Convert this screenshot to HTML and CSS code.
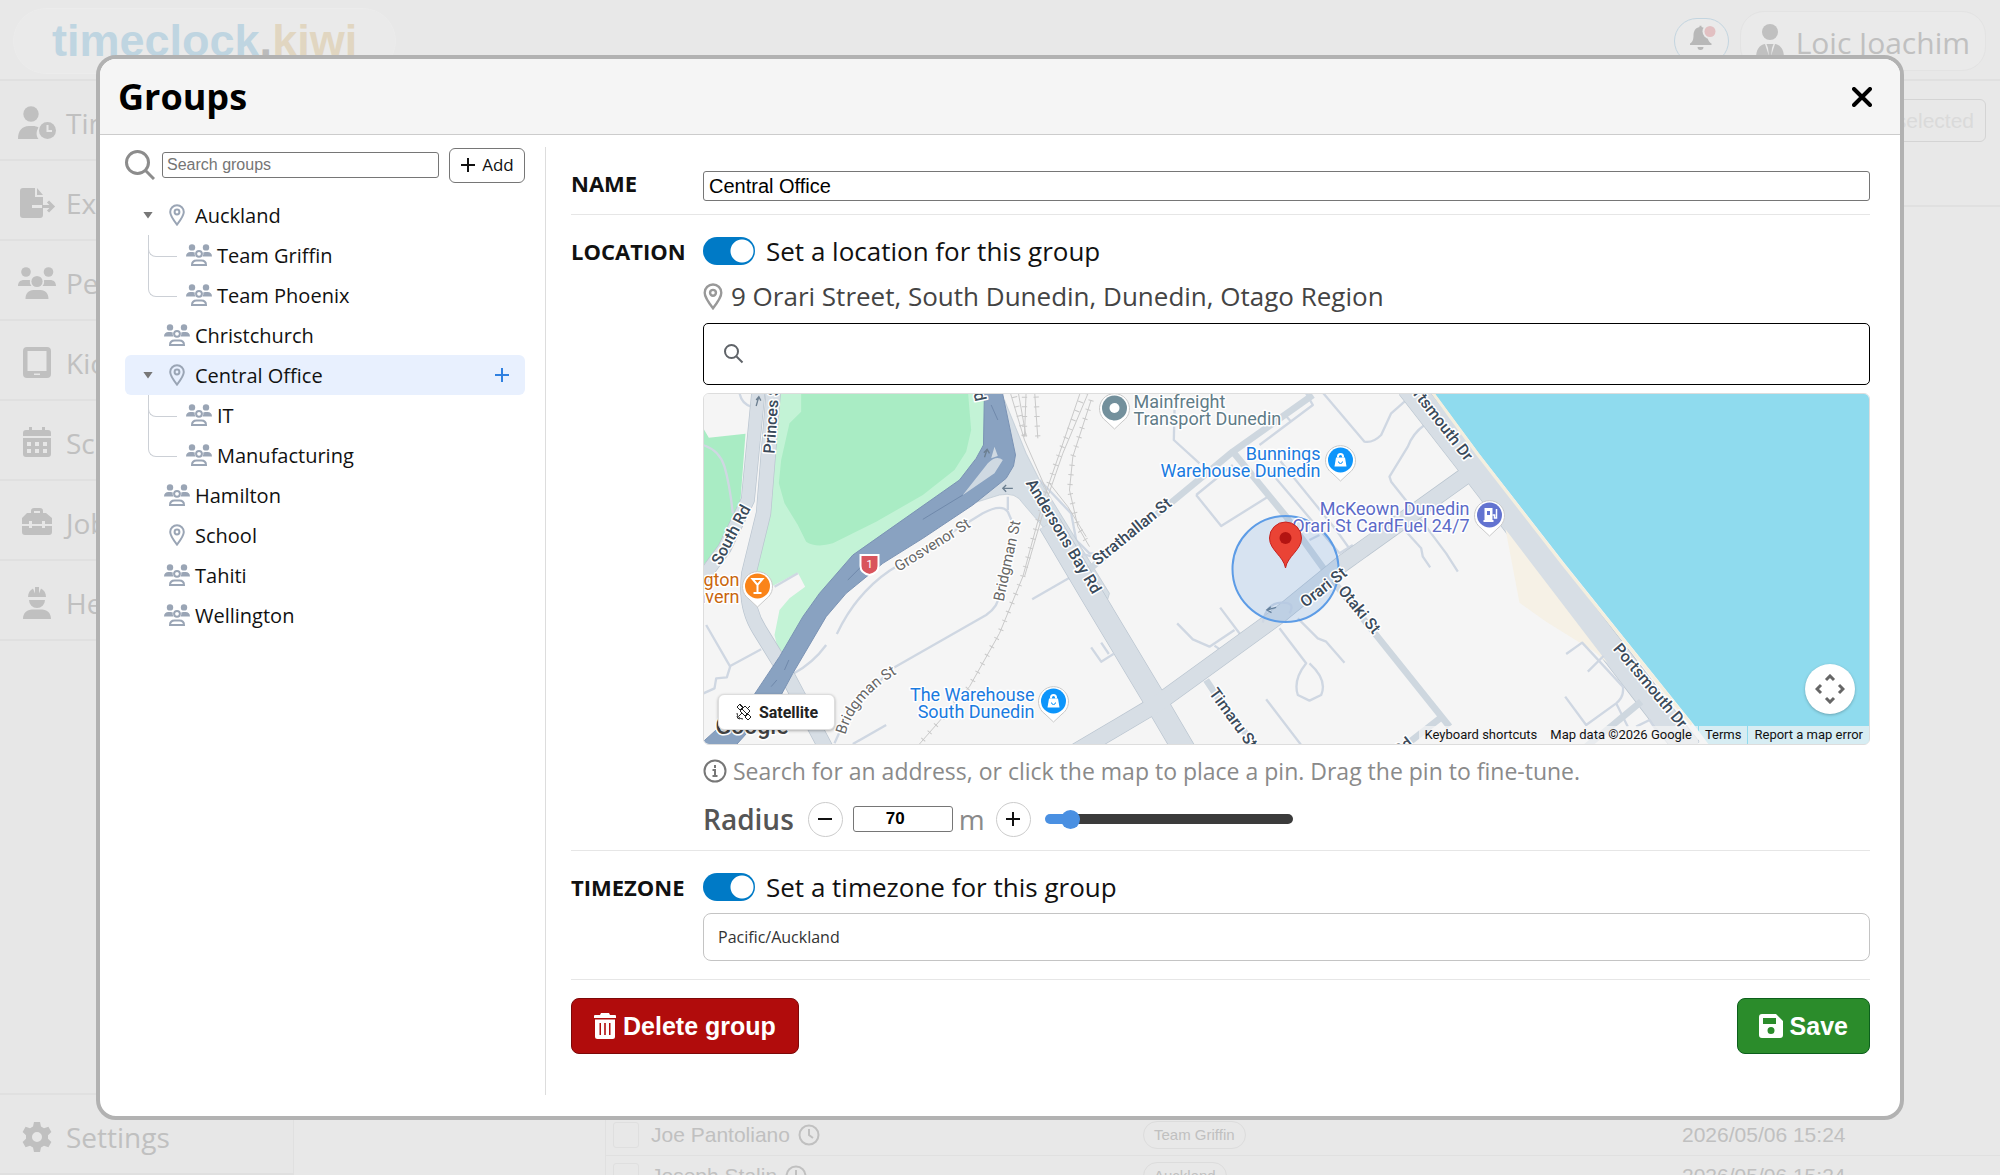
FILE: index.html
```html
<!DOCTYPE html>
<html lang="en">
<head>
<meta charset="utf-8">
<title>Groups</title>
<meta name="viewport" content="width=device-width, initial-scale=1">
<link rel="stylesheet" href="styles.css">
</head>
<body>
<svg class="sprite" aria-hidden="true">
  <symbol id="i-users" viewBox="0 0 26 22">
    <circle cx="6" cy="3.4" r="3.2"/><circle cx="20" cy="3.4" r="3.2"/>
    <path d="M0 12.6C0 9.6 1.8 8 4.4 8h2.4c.8 0 1.400.2 2 .5-.4 1.600 0 3 .8 4.100H0zM26 12.600C26 9.600 24.200 8 21.600 8h-2.400c-.8 0-1.400.2-2 .5.4 1.600 0 3-.8 4.100H26z"/>
    <circle class="ring" cx="13" cy="9.800" r="2.900"/>
    <path class="ring" d="M6 20.900c0-2.800 2-4.500 4.600-4.500h4.800c2.600 0 4.600 1.700 4.600 4.500z"/>
  </symbol>
  <symbol id="i-people" viewBox="0 0 38 32">
    <circle cx="8" cy="5" r="4.800"/><circle cx="30.500" cy="5" r="4.800"/><circle cx="19" cy="14.500" r="5.600"/>
    <path d="M0 19c0-4 2.400-6 6-6h4.400c.6 0 1.200.1 1.700.3-.6 2.200 0 4.400 1.400 5.700zM38 19c0-4-2.400-6-6-6h-4.400c-.6 0-1.200.1-1.700.3.6 2.200 0 4.400-1.400 5.700zM7.500 32c0-5.500 3-9 8-9h7c5 0 8 3.500 8 9z"/>
  </symbol>
  <symbol id="i-pin" viewBox="0 0 16 22">
    <path class="line" d="M8 20.600C5.500 17.400 1.200 11.600 1.200 8a6.800 6.800 0 0 1 13.600 0c0 3.600-4.300 9.400-6.800 12.600z"/>
    <circle class="line" cx="8" cy="8" r="2.400"/>
  </symbol>
  <symbol id="i-plus" viewBox="0 0 16 16"><path class="line" d="M8 1v14M1 8h14"/></symbol>
  <symbol id="i-clock" viewBox="0 0 22 22"><circle class="line" cx="11" cy="11" r="9.500"/><path class="line" d="M11 5v6l4 3"/></symbol>
  <symbol id="i-mappin" viewBox="-18 -18 36 42">
    <path class="pin-edge" d="M0 21l-8.500-8A15 15 0 1 1 8.500 13z"/>
    <circle r="12.500"/>
  </symbol>
  <symbol id="i-bag" viewBox="-7 -7 14 14"><path d="M-4.500-2.500h9l1.500 9H-6z"/><path class="line" d="M-2.500-2.500v-1a2.500 2.500 0 0 1 5 0v1"/><path class="cut" d="M-2 1.500a2 2 0 0 0 4 0"/></symbol>
</svg>

<div class="app">
  <header class="topbar">
    <a class="logo" href="#"><span class="logo-time">timeclock</span><span class="logo-dot">.</span><span class="logo-kiwi">kiwi</span></a>
    <div class="topbar-right">
      <button class="bell" type="button" aria-label="Notifications">
        <svg width="24" height="27" viewBox="0 0 24 27"><path d="M10.500 2V.800h2V2c4 .8 6 4 6 8 0 5 1.500 7 4 8.500v1.500H1v-1.500C3.500 17 4.500 15 4.500 10c0-4 2-7.200 6-8zM8.500 22h6a3 3 0 0 1-6 0z"/><circle class="bell-halo" cx="21" cy="6.500" r="7.500"/><circle class="bell-dot" cx="21" cy="6.500" r="5.500"/></svg>
      </button>
      <button class="user" type="button">
        <svg width="28" height="36" viewBox="0 0 28 36"><circle cx="14" cy="8" r="8"/><path d="M0 34c0-8 3-13 9-14l4 12-1-8-1.500-4h7L16 24l-1 8 4-12c6 1 9 6 9 14z"/></svg>
        Loic Joachim
      </button>
    </div>
  </header>
  <nav class="sidebar">
    <a class="nav-item" href="#"><svg width="38" height="34" viewBox="0 0 38 34"><circle cx="13" cy="8" r="7.700"/><path d="M0 33c0-8 4-13 11-13h4c2 0 4 .5 5.500 1.500C18 25.500 18 30 20.500 33z"/><circle cx="29.500" cy="24.500" r="8.500"/><path class="notch" d="M29.500 19v6h4.500"/></svg>Timesheets</a>
    <a class="nav-item" href="#"><svg width="38" height="34" viewBox="0 0 38 34"><path d="M5 2h12v9h8v8H14v3h11v7a3 3 0 0 1-3 3H5a3 3 0 0 1-3-3V5a3 3 0 0 1 3-3zM19 2l6 7h-6z"/><path class="line thick" d="M24 20.500h10M30 15.500l5 5-5 5"/></svg>Export</a>
    <a class="nav-item" href="#"><svg width="38" height="32"><use href="#i-people"/></svg>People</a>
    <a class="nav-item" href="#"><svg width="38" height="34" viewBox="0 0 38 34"><path fill-rule="evenodd" d="M9 1h20a4 4 0 0 1 4 4v23a4 4 0 0 1-4 4H9a4 4 0 0 1-4-4V5a4 4 0 0 1 4-4zm.5 4v20h19V5zM16 27.500v1.500h6v-1.500z"/></svg>Kiosks</a>
    <a class="nav-item" href="#"><svg width="38" height="34" viewBox="0 0 38 34"><path fill-rule="evenodd" d="M11 1h3v3h10V1h3v3h3a3 3 0 0 1 3 3v3H5V7a3 3 0 0 1 3-3h3zM5 12h28v16a3 3 0 0 1-3 3H8a3 3 0 0 1-3-3zm4 4v4h4v-4zm8 0v4h4v-4zm8 0v4h4v-4zM9 23v4h4v-4zm8 0v4h4v-4zm8 0v4h4v-4z"/></svg>Schedule</a>
    <a class="nav-item" href="#"><svg width="38" height="34" viewBox="0 0 38 34"><path fill-rule="evenodd" d="M13 7V5a3 3 0 0 1 3-3h6a3 3 0 0 1 3 3v2h3l6 5v6h-7v-3h-3v3H14v-3h-3v3H4v-6l5-5zm3 0h6V5h-6zM4 20h7v2h3v-2h10v2h3v-2h7v6a3 3 0 0 1-3 3H7a3 3 0 0 1-3-3z"/></svg>Jobs</a>
    <a class="nav-item" href="#"><svg width="38" height="34" viewBox="0 0 38 34"><path d="M10 11c0-4 2-7 5-8.500l2 5V1h4v6.500l2-5c3 1.500 5 4.500 5 8.500zM11 14h16a8 8 0 0 1-16 0zM5 33c0-6 4-9.500 9-9.500h10c5 0 9 3.500 9 9.500z"/></svg>Health</a>
    <a class="nav-item nav-settings" href="#"><svg width="38" height="34" viewBox="0 0 38 34"><path fill-rule="evenodd" d="M16 2h6l1 4.500 3 1.700 4.400-1.400 3 5.200-3.400 3.200v3.600l3.400 3.200-3 5.200-4.400-1.400-3 1.700-1 4.500h-6l-1-4.500-3-1.700L7.600 27.200l-3-5.200L8 18.800v-3.600L4.600 12l3-5.200L12 8.200l3-1.700zm3 10a5 5 0 1 0 0 10 5 5 0 0 0 0-10z"/></svg>Settings</a>
  </nav>
  <main class="main">
    <div class="toolbar"><button class="ghost-button" type="button">selected</button></div>
    <div class="content">
      <table class="people">
        <tbody>
          <tr><td><label class="person"><input type="checkbox" aria-label="Select Joe Pantoliano">Joe Pantoliano <svg width="22" height="22"><use href="#i-clock"/></svg></label></td><td><span class="tag">Team Griffin</span></td><td>2026/05/06 15:24</td></tr>
          <tr><td><label class="person"><input type="checkbox" aria-label="Select Joseph Stalin">Joseph Stalin <svg width="22" height="22"><use href="#i-clock"/></svg></label></td><td><span class="tag">Auckland</span></td><td>2026/05/06 15:24</td></tr>
        </tbody>
      </table>
    </div>
  </main>
</div>

<section class="modal" role="dialog" aria-labelledby="modal-title">
  <header class="modal-header">
    <h1 id="modal-title">Groups</h1>
    <button class="close" type="button" aria-label="Close"><svg width="20" height="20" viewBox="0 0 20 20"><path d="M2 2l16 16M18 2L2 18"/></svg></button>
  </header>
  <div class="modal-body">
    <aside class="groups">
      <div class="group-search">
        <svg width="30" height="30" viewBox="0 0 30 30" aria-hidden="true"><circle cx="12.500" cy="12.500" r="11"/><path d="M20.500 20.500l8.500 8.500"/></svg>
        <input type="text" placeholder="Search groups" aria-label="Search groups">
        <button class="add" type="button"><svg width="16" height="16"><use href="#i-plus"/></svg>Add</button>
      </div>
      <ul class="tree">
        <li>
          <div class="node"><button class="caret" type="button" aria-label="Collapse Auckland"></button><svg class="icon"><use href="#i-pin"/></svg><a href="#">Auckland</a></div>
          <ul>
            <li><div class="node"><svg class="icon"><use href="#i-users"/></svg><a href="#">Team Griffin</a></div></li>
            <li><div class="node"><svg class="icon"><use href="#i-users"/></svg><a href="#">Team Phoenix</a></div></li>
          </ul>
        </li>
        <li><div class="node"><span class="caret-space"></span><svg class="icon"><use href="#i-users"/></svg><a href="#">Christchurch</a></div></li>
        <li>
          <div class="node selected"><button class="caret" type="button" aria-label="Collapse Central Office"></button><svg class="icon"><use href="#i-pin"/></svg><a href="#">Central Office</a><button class="add-child" type="button" aria-label="Add subgroup"><svg width="16" height="16"><use href="#i-plus"/></svg></button></div>
          <ul>
            <li><div class="node"><svg class="icon"><use href="#i-users"/></svg><a href="#">IT</a></div></li>
            <li><div class="node"><svg class="icon"><use href="#i-users"/></svg><a href="#">Manufacturing</a></div></li>
          </ul>
        </li>
        <li><div class="node"><span class="caret-space"></span><svg class="icon"><use href="#i-users"/></svg><a href="#">Hamilton</a></div></li>
        <li><div class="node"><span class="caret-space"></span><svg class="icon"><use href="#i-pin"/></svg><a href="#">School</a></div></li>
        <li><div class="node"><span class="caret-space"></span><svg class="icon"><use href="#i-users"/></svg><a href="#">Tahiti</a></div></li>
        <li><div class="node"><span class="caret-space"></span><svg class="icon"><use href="#i-users"/></svg><a href="#">Wellington</a></div></li>
      </ul>
    </aside>

    <form class="form">
      <div class="row row-name">
        <label class="row-label" for="name">NAME</label>
        <input class="name-input" id="name" type="text" value="Central Office">
      </div>

      <div class="row">
        <span class="row-label">LOCATION</span>
        <div class="fields">
          <label class="toggle"><input type="checkbox" role="switch" checked>Set a location for this group</label>
          <p class="address"><svg width="20" height="27" viewBox="0 0 16 22"><use href="#i-pin"/></svg>9 Orari Street, South Dunedin, Dunedin, Otago Region</p>
          <div class="place-search">
            <svg width="24" height="24" viewBox="0 0 24 24" aria-hidden="true"><circle cx="9.500" cy="9.500" r="6.500"/><path d="M14.500 14.500l6 6"/></svg>
            <input type="text" aria-label="Search for an address">
          </div>

          <div class="map">
            <svg class="map-canvas" viewBox="0 0 1166 350" preserveAspectRatio="xMidYMid slice">
              <rect width="1166" height="350" fill="#f5f5f5"/>
              <g transform="scale(.33333)">
                <!-- west: parks, highway, rail yard -->
                <g transform="translate(-42 -42)">
                  <path fill="#a9ecc4" d="M30 125L58 173 168 161 152 375 105 480 30 570z"/>
                  <path fill="#c3f3d6" d="M262 30H890V190L810 305 500 540 400 660 300 850 262 795 255 765 270 690 300 655 347 620 325 578 245 620 195 575 240 400z"/>
                  <path fill="#a9ecc4" d="M335 30H835L845 150 830 215 795 270 700 345 560 425 430 490Q380 505 350 485L325 435 285 370 268 310 275 240 300 130 335 95z"/>
                  <path class="lane" d="M40 195Q90 210 105 260T130 400"/>
                  <path class="lane" d="M150 38Q155 70 185 80M255 620L325 580"/>
                  <path class="lane" d="M50 735L122 860 112 892 80 895 75 925 42 940M118 860L215 808M310 882Q370 850 410 795M490 1092L590 1035"/>
                  <path class="lane" d="M442 762Q500 640 600 572L880 400Q935 370 955 395L970 430M955 350V390M610 865L890 705Q940 670 925 620M435 1090L480 990 610 865"/>
                  <path class="lane" d="M1028 658L1140 593M1050 300L1145 400 1160 480 1200 520H1260"/>
                  <path class="road-edge" stroke-width="42" d="M207 30L175 360 105 505 20 620"/>
                  <path class="road" stroke-width="38" d="M207 30L175 360 105 505 20 620"/>
                  <path class="road-edge" stroke-width="46" d="M252 30L222 400 178 580Q165 680 210 750L290 880 412 1110"/>
                  <path class="road" stroke-width="42" d="M252 30L222 400 178 580Q165 680 210 750L290 880 412 1110"/>
                  <path fill="#d6dee5" stroke="#b9c5d0" stroke-width="2" d="M850 370L930 345Q980 335 1000 370L1060 440 1230 740 1260 640 1050 300 1010 220 945 60 900 60 930 260z"/>
                  <path fill="#89a2c1" stroke="#7a93b4" stroke-width="3" d="M885 20L882 195 860 235 810 300 490 525 390 640 340 710 270 830 190 950 30 1095H140L275 945 310 880 410 710 470 640 580 550 700 475 850 375 950 295 972 258 978 225 935 20z"/>
                  <path fill="#cfd9e2" d="M940 240Q920 225 895 250L820 345 915 280zM905 235L925 228 915 200z"/>
                  <path stroke="#6f89ab" stroke-width="3" fill="none" d="M700 418L820 345M475 600L515 560M285 870L298 840M245 920L262 900M905 75L925 120"/>
                  <g class="arrow"><path d="M200 78L208 50M200 60L208 50 214 62M885 232L893 208M883 218L893 208 900 220M970 325H940M950 315L940 325 950 335"/></g>
                  <g class="rail"><path d="M960 30L1005 180 1075 340M985 30L1010 170M1010 30L1005 170M1035 30L1045 175M1175 30L1110 220 1065 350 1000 590 930 760 840 920 690 1092M1200 30L1120 220 1075 350 1005 590M1205 60L1150 230 1140 330 1165 440 1200 500M1080 310L1135 380 1190 470"/></g>
                  <g class="ties"><path d="M975 50L1005 170M1005 50V170M1040 50L1045 175M1185 38L1110 220 1065 350 1000 590 930 760 840 920 690 1092M1205 60L1150 230 1140 330 1165 440 1200 500"/></g>
                </g>
                <!-- centre: Orari St, Strathallan St -->
                <g transform="translate(1128 -42)">
                  <path class="lane" d="M285 90L283 180 360 250M350 345L425 438 563 352M350 345L460 255M540 195L700 75 680 40M612 100L635 125M730 38L855 185Q880 190 905 165L935 100 975 65M1035 135Q1000 160 985 200L930 290 935 305 1010 400 1100 520 1135 575M560 260L780 520 820 495M600 240L770 450 820 520M930 400L1025 505 1030 530 1052 562M690 480L720 465M600 745L680 850Q640 900 655 945L690 962 725 945Q745 900 690 850M655 715L715 775 740 785 795 848M293 730L340 778 390 800 465 750M405 797L445 825M422 683L495 780M560 958L665 1095M35 802L65 845 102 822M65 788L88 822M0 520L40 530"/>
                  <path class="street" d="M700 45L460 215 270 372 -10 600M460 215L620 410 750 590 890 765 1110 1040M1085 1012L960 1110M380 900L420 960 530 1100"/>
                  <path class="road-edge" stroke-width="70" d="M-90 430L40 650 235 975 320 1120"/>
                  <path class="road-edge" stroke-width="52" d="M1175 275L790 550 600 705 380 865 235 970 -10 1115"/>
                  <path class="road-edge" stroke-width="80" d="M990 20L1200 290 1790 1060 1830 1110"/>
                  <path class="road" stroke-width="66" d="M-90 430L40 650 235 975 320 1120"/>
                  <path class="road" stroke-width="48" d="M1175 275L790 550 600 705 380 865 235 970 -10 1115"/>
                  <path class="road" stroke-width="76" d="M990 20L1200 290 1790 1060 1830 1110"/>
                  <path class="lane" d="M550 728Q560 670 605 668T630 700"/>
                  <g class="arrow"><path d="M590 682L562 690M574 680L562 690 576 698"/></g>
                </g>
                <!-- east: harbour -->
                <g transform="translate(2328 -42)">
                  <path fill="#f6f1e6" d="M78 448L385 850 345 815 200 725 120 668z"/>
                  <path class="lane" d="M260 822L308 788 430 920Q435 950 410 970L320 1035 257 950M325 875L372 828M410 970L445 1040M470 1040L510 1020 530 1050"/>
                  <path class="street" d="M485 965L400 1035 320 1100"/>
                  <path fill="#8fdbee" d="M-150 20L0 222 260 556 640 1030 700 1110H1200V20z"/>
                  <path fill="none" stroke="#f4efdf" stroke-width="9" d="M-154 20L-4 225 256 560 636 1034"/>
                </g>
              </g>
              <g class="radius"><circle cx="582" cy="175" r="53"/></g>
              <g class="label-road">
                <text transform="translate(71 60) rotate(-86)">Princes St</text>
                <text transform="translate(17 172) rotate(-62)">South Rd</text>
                <text class="end" transform="translate(272 8) rotate(78)">Rd</text>
                <text transform="translate(322 89) rotate(59)">Andersons Bay Rd</text>
                <text transform="translate(394 172) rotate(-39)">Strathallan St</text>
                <text transform="translate(602 214) rotate(-38)">Orari St</text>
                <text transform="translate(634 197) rotate(51)">Otaki St</text>
                <text transform="translate(505 299) rotate(54)">Timaru St</text>
                <text class="end" transform="translate(762 68) rotate(52)">Portsmouth Dr</text>
                <text transform="translate(909 255) rotate(50)">Portsmouth Dr</text>
                <text class="end" transform="translate(710 351) rotate(-38)">Teviot Rd</text>
              </g>
              <g class="label-street">
                <path id="bridgman" fill="none" d="M142 341Q152 302 200 276"/>
                <text transform="translate(195 178) rotate(-32)">Grosvenor St</text>
                <text transform="translate(300 208) rotate(-78)">Bridgman St</text>
                <text><textPath href="#bridgman">Bridgman St</textPath></text>
              </g>
              <g class="label-place">
                <g fill="#5f7c87"><text x="430" y="14">Mainfreight</text><text x="430" y="31">Transport Dunedin</text></g>
                <g class="end" fill="#1a7be0"><text x="617" y="66">Bunnings</text><text x="617" y="83">Warehouse Dunedin</text><text x="331" y="307">The Warehouse</text><text x="331" y="324">South Dunedin</text></g>
                <g class="end" fill="#5c6bc8"><text x="766" y="121">McKeown Dunedin</text><text x="766" y="138">Orari St CardFuel 24/7</text></g>
                <g class="end" fill="#c9660c"><text x="36" y="192">Kensington</text><text x="36" y="209">Tavern</text></g>
              </g>
              <g class="places">
                <use href="#i-mappin" x="393" y="-4" width="36" height="42" fill="#73909c"/><circle cx="411" cy="14" r="5" fill="#fff"/>
                <use href="#i-mappin" x="619" y="48" width="36" height="42" fill="#0d95fb"/><use class="glyph" href="#i-bag" x="630" y="59" width="14" height="14"/>
                <use href="#i-mappin" x="332" y="289" width="36" height="42" fill="#0d95fb"/><use class="glyph" href="#i-bag" x="343" y="300" width="14" height="14"/>
                <use href="#i-mappin" x="768" y="103" width="36" height="42" fill="#6373d0"/><path fill="#fff" fill-rule="evenodd" d="M781 114h8v12h1v2h-10v-2h1zm2.500 3v4h3v-4z"/><path fill="none" stroke="#fff" stroke-width="1.500" d="M789 121h2v3h2v-9"/>
                <use href="#i-mappin" x="36" y="174" width="36" height="42" fill="#fa8419"/><path fill="none" stroke="#fff" stroke-width="2" d="M49 185h10l-5 6zM54 190v9M50 199h8"/>
              </g>
              <path fill="#d9545c" stroke="#fff" stroke-width="2" d="M157 161h18v11q0 7-9 9-9-2-9-9z"/><text class="shield" x="166" y="174">1</text>
              <path fill="#ea4335" stroke="#c5221f" d="M582 174C580 162 566 156 566 144a16 16 0 0 1 32 0c0 12-14 18-16 30z"/><circle cx="582" cy="144" r="6" fill="#b31412"/>
              <text class="brand" x="12" y="340">Google</text>
            </svg>
            <button class="satellite" type="button"><svg width="18" height="18" viewBox="0 0 18 18"><path d="M7 6l3-3 5 5-3 3zM7 6L5 8l5 5 2-2zM5 2l3 3M2 4l3-3 3 3-3 3zM10 14l3-3 3 3-3 3zM7 10l-3 3M2 10a6 6 0 0 0 6 6M2 13a3 3 0 0 0 3 3M13 5l2-2"/></svg>Satellite</button>
            <button class="camera" type="button" aria-label="Map camera controls"><svg width="30" height="30" viewBox="0 0 30 30"><path d="M11 6l4-4 4 4M11 24l4 4 4-4M6 11l-4 4 4 4M24 11l4 4-4 4"/></svg></button>
            <div class="map-footer"><button type="button">Keyboard shortcuts</button><span>Map data ©2026 Google</span><a href="#">Terms</a><a href="#">Report a map error</a></div>
          </div>

          <p class="hint"><svg width="24" height="24" viewBox="0 0 24 24"><circle cx="12" cy="12" r="10.500"/><path d="M12 6v3M9.500 11H12v6M9.500 17h5"/></svg>Search for an address, or click the map to place a pin. Drag the pin to fine-tune.</p>
          <div class="radius-row">
            <label class="radius-label" for="radius">Radius</label>
            <button class="step" type="button" aria-label="Decrease radius"><svg width="16" height="16" viewBox="0 0 16 16"><path class="line" d="M1 8h14"/></svg></button>
            <input class="radius-input" id="radius" type="number" value="70">
            <span class="unit">m</span>
            <button class="step" type="button" aria-label="Increase radius"><svg width="16" height="16"><use href="#i-plus"/></svg></button>
            <input class="slider" type="range" min="0" max="1000" value="70" aria-label="Radius in metres">
          </div>
        </div>
      </div>

      <div class="row row-zone">
        <span class="row-label">TIMEZONE</span>
        <div class="fields">
          <label class="toggle"><input type="checkbox" role="switch" checked>Set a timezone for this group</label>
          <select class="zone" aria-label="Timezone"><option>Pacific/Auckland</option></select>
        </div>
      </div>

      <div class="actions">
        <button class="btn btn-delete" type="button"><svg width="22" height="26" viewBox="0 0 22 26"><path fill-rule="evenodd" d="M7 0h8l1 2h5a1 1 0 0 1 1 1v2H0V3a1 1 0 0 1 1-1h5zM1 6.500h20v17a2.500 2.500 0 0 1-2.500 2.500h-15A2.500 2.500 0 0 1 1 23.500zM5.500 10v12H7V10zm4.700 0v12h1.600V10zM15 10v12h1.500V10z"/></svg>Delete group</button>
        <button class="btn btn-save" type="submit"><svg width="24" height="24" viewBox="0 0 24 24"><path fill-rule="evenodd" d="M3 0h14l7 7v14a3 3 0 0 1-3 3H3a3 3 0 0 1-3-3V3a3 3 0 0 1 3-3zm1 4v6h13V4zm8 9a3.500 3.500 0 1 0 0 7 3.500 3.500 0 0 0 0-7z"/></svg>Save</button>
      </div>
    </form>
  </div>
</section>
</body>
</html>
```
FILE: styles.css
```css
:root {
  --ui: "Open Sans", "Noto Sans", sans-serif;
  --arial: "Liberation Sans", Arial, sans-serif;
  --muted: #c0c0c0;
  --rule: #e6e6e6;
}

* { box-sizing: border-box; }

body {
  margin: 0;
  background: #e8e8e8;
  font-family: var(--ui);
  color: #111;
  overflow: hidden;
}

h1, p, ul { margin: 0; padding: 0; }
ul { list-style: none; }
a { color: inherit; text-decoration: none; }
button { font: inherit; color: inherit; padding: 0; cursor: pointer; }
svg { flex: none; }
.sprite { display: none; }

.line { fill: none; stroke: currentColor; stroke-width: 2; }
.ring { fill: none; stroke: currentColor; stroke-width: 2; }
.thick { stroke-width: 3; }

/* Page behind the dialog */
.app {
  display: grid;
  grid-template: 81px 1fr / 294px 1fr;
  height: 100vh;
  overflow: hidden;
  color: var(--muted);
  fill: currentColor;
}

.topbar {
  grid-column: 1 / -1;
  display: flex;
  justify-content: space-between;
  align-items: center;
  padding: 2px 14px 0 13px;
  border-bottom: 2px solid #e0e0e0;
}

.logo {
  height: 66px;
  padding: 0 38px;
  border: 1px solid #ececec;
  border-radius: 33px;
  background: #eaeaea;
  font: bold 45px/64px var(--arial);
}
.logo-time { color: #bfd5e1; }
.logo-dot { color: #bbb; }
.logo-kiwi { color: #e1d6c1; }

.topbar-right { display: flex; align-items: center; gap: 11px; }
.bell {
  width: 55px;
  height: 46px;
  border: 1px solid #c3d5e0;
  border-radius: 23px;
  background: #eaeaea;
}
.bell svg { overflow: visible; fill: #b8b8b8; }
.bell .bell-halo { fill: #eaeaea; }
.bell .bell-dot { fill: #e2c0c2; }
.user {
  display: flex;
  align-items: center;
  gap: 12px;
  height: 60px;
  padding: 3px 15px 0 15px;
  border: 1px solid #e3e3e3;
  border-radius: 24px;
  background: #eaeaea;
  font-size: 30px;
}
.user svg { fill: var(--muted); }

.sidebar {
  display: flex;
  flex-direction: column;
  border-right: 1px solid #e0e0e0;
  background: #e7e7e7;
}
.nav-item {
  display: flex;
  align-items: center;
  gap: 10px;
  height: 80px;
  padding: 5px 0 0 18px;
  border-bottom: 2px solid #e0e0e0;
  font-size: 28px;
}
.nav-settings {
  height: 82px;
  margin-top: auto;
  border-top: 2px solid #e0e0e0;
}
.notch { fill: none; stroke: #e7e7e7; stroke-width: 2; }

.main { display: flex; flex-direction: column; min-height: 0; }
.toolbar {
  height: 126px;
  padding: 18px 14px;
  border-bottom: 2px solid #e0e0e0;
  text-align: right;
}
.ghost-button {
  height: 43px;
  padding: 0 11px;
  border: 1px solid #d4d4d4;
  border-radius: 6px;
  background: none;
  color: #dadada;
  font: 21px var(--arial);
}
.content {
  flex: 1;
  display: flex;
  flex-direction: column;
  justify-content: flex-end;
  margin: 0 0 -21px 311px;
  border-left: 1px solid #e0e0e0;
}
.people {
  width: 100%;
  border-collapse: collapse;
  table-layout: fixed;
  font: 21px var(--arial);
}
.people td { height: 40px; padding: 0; border-bottom: 1px solid #e0e0e0; }
.people td:first-child { width: 537px; padding-left: 7px; }
.people td:nth-child(2) { width: 539px; }
.person { display: flex; align-items: center; gap: 8px; }
.person input {
  appearance: none;
  width: 26px;
  height: 26px;
  margin: 0 4px 0 0;
  border: 1px solid #dfdfdf;
  border-radius: 3px;
}
.tag {
  display: inline-block;
  height: 28px;
  padding: 0 10px;
  border: 1px solid #dcdcdc;
  border-radius: 14px;
  font-size: 15px;
  line-height: 26px;
  vertical-align: middle;
}

/* Dialog */
.modal {
  position: fixed;
  inset: 55px 96px;
  display: flex;
  flex-direction: column;
  border: 4px solid #b2b2b2;
  border-radius: 20px;
  background: #fff;
  overflow: hidden;
}
.modal-header {
  display: flex;
  align-items: center;
  justify-content: space-between;
  height: 76px;
  padding: 0 28px 0 18px;
  border-bottom: 1px solid #ccc;
  background: #f5f5f5;
}
.modal-header h1 { font-size: 36px; line-height: 48px; color: #000; }
.close { height: 20px; border: 0; background: none; line-height: 0; }
.close path { stroke: #000; stroke-width: 4; stroke-linecap: round; }

.modal-body {
  flex: 1;
  display: flex;
  gap: 25px;
  padding: 12px 30px 21px 25px;
}

.groups { width: 421px; padding-right: 20px; border-right: 1px solid #ddd; }
.group-search { display: flex; align-items: center; height: 36px; margin-bottom: 12px; }
.group-search > svg { fill: none; stroke: #8c8c8c; stroke-width: 3; }
.group-search input {
  flex: 1;
  min-width: 0;
  height: 26px;
  margin: 0 10px 0 7px;
  padding: 0 4px;
  border: 1px solid #767676;
  border-radius: 3px;
  font: 16px var(--arial);
}
.group-search input::placeholder { color: #757575; }
.add {
  display: flex;
  align-items: center;
  justify-content: center;
  gap: 6px;
  width: 76px;
  height: 35px;
  border: 1px solid #767676;
  border-radius: 6px;
  background: #fff;
  font-size: 17px;
  line-height: 24px;
}

.node {
  display: flex;
  align-items: center;
  height: 40px;
  padding: 0 15px 0 18px;
  border-radius: 6px;
  font-size: 20px;
}
.node.selected { background: #e8f0fe; }
.node a { flex: 1; margin-left: 5px; color: #111; }
.icon { width: 26px; height: 22px; color: #9aa5b5; fill: currentColor; }
.caret, .caret-space { width: 10px; margin-right: 11px; }
.caret {
  height: 7px;
  border: 0;
  background: #777;
  clip-path: polygon(0 0, 100% 0, 50% 100%);
}
.add-child { border: 0; background: none; color: #2f80e0; line-height: 0; }

.tree ul { margin-left: 23px; }
.tree ul li { position: relative; }
.tree ul .node { padding-left: 38px; }
.tree ul li::before {
  content: "";
  position: absolute;
  left: 0;
  top: 0;
  width: 28px;
  height: 21px;
  border: solid #ccd0d6;
  border-width: 0 0 1px 1px;
  border-bottom-left-radius: 8px;
}
.tree ul li:not(:last-child)::after {
  content: "";
  position: absolute;
  left: 0;
  top: 0;
  height: 100%;
  border-left: 1px solid #ccd0d6;
}

.form { flex: 1; min-width: 0; }
.row {
  display: grid;
  grid-template-columns: 132px minmax(0, 1fr);
  padding: 18px 0 9px;
  border-bottom: 1px solid var(--rule);
}
.row-name { padding: 24px 0 13px; }
.row-zone { padding-bottom: 18px; }
.row-label { font-size: 22px; font-weight: bold; line-height: 36px; }
.row-name .row-label { line-height: 24px; }
.name-input {
  height: 30px;
  padding: 0 5px;
  border: 1px solid #767676;
  border-radius: 3px;
  font: 20px var(--arial);
}
.fields { display: flex; flex-direction: column; gap: 8px; }

.toggle { display: flex; align-items: center; gap: 11px; height: 36px; font-size: 26px; }
.toggle input {
  appearance: none;
  width: 52px;
  height: 28px;
  margin: 0;
  border-radius: 14px;
  background: radial-gradient(circle at 39px 14px, #fff 11px, #007ac6 12px);
}

.address { display: flex; align-items: center; gap: 8px; height: 38px; font-size: 26px; color: #444; }
.address svg { color: #999; }

.place-search {
  display: flex;
  align-items: center;
  gap: 10px;
  height: 62px;
  padding: 0 18px;
  border: 1px solid #000;
  border-radius: 5px;
}
.place-search svg { fill: none; stroke: #5f6368; stroke-width: 2; }
.place-search input { flex: 1; height: 40px; border: 0; outline: 0; font: 20px var(--arial); }

.map {
  position: relative;
  height: 352px;
  border: 1px solid #ddd;
  border-radius: 6px;
  overflow: hidden;
  font-family: Roboto, sans-serif;
}
.map-canvas { display: block; width: 100%; height: 100%; }
.road, .road-edge, .lane, .street { fill: none; stroke-linejoin: round; }
.road { stroke: #d7dee5; }
.road-edge { stroke: #b9c4cf; }
.lane { stroke: #cfd7e2; stroke-width: 7; }
.street { stroke: #ced7df; stroke-width: 20; }
.rail path { fill: none; stroke: #c9c9c9; stroke-width: 3; }
.ties path { fill: none; stroke: #c9c9c9; stroke-width: 16; stroke-dasharray: 3 26; }
.arrow path { fill: none; stroke: #6c7f90; stroke-width: 4; }
.radius circle { fill: #4a90e2; fill-opacity: .17; stroke: #5d9ce6; stroke-width: 2; }
.map text { paint-order: stroke; stroke: #fff; stroke-width: 3px; stroke-linejoin: round; }
.end { text-anchor: end; }
.label-road text { font-size: 16px; font-weight: 500; fill: #3a4a5a; }
.label-street text { font-size: 15px; fill: #666; }
.label-place text { font-size: 18px; }
.map text.shield { font-size: 11px; fill: #fff; stroke: none; text-anchor: middle; }
.map text.brand { font-size: 23px; font-weight: 500; fill: #444; }
.pin-edge { fill: #fff; stroke: #c9c9c9; }
.glyph { fill: #fff; color: #fff; }
.cut { fill: none; stroke: #0d95fb; stroke-width: 1; }

.satellite {
  position: absolute;
  left: 14px;
  bottom: 14px;
  display: flex;
  align-items: center;
  justify-content: center;
  gap: 6px;
  width: 117px;
  height: 36px;
  border: 1px solid #ddd;
  border-radius: 6px;
  background: #fff;
  box-shadow: 0 1px 3px rgb(0 0 0 / 30%);
  color: #222;
  font-size: 16px;
  font-weight: 700;
}
.satellite svg { fill: none; stroke: #222; stroke-width: 1; }
.camera {
  position: absolute;
  right: 14px;
  bottom: 30px;
  width: 50px;
  height: 50px;
  border: 0;
  border-radius: 50%;
  background: #fff;
  box-shadow: 0 1px 3px rgb(0 0 0 / 25%);
  line-height: 0;
}
.camera path { fill: none; stroke: #666; stroke-width: 3; }
.map-footer {
  position: absolute;
  right: 0;
  bottom: 0;
  display: flex;
  gap: 1px;
  color: #111;
  font-size: 13px;
  line-height: 18px;
}
.map-footer > * { padding: 0 6px; border: 0; background: rgb(245 245 245 / 70%); }

.hint { display: flex; align-items: center; gap: 6px; height: 36px; font-size: 23px; color: #8a8a8a; }
.hint svg { fill: none; stroke: #777; stroke-width: 2; }

.radius-row { display: flex; align-items: center; height: 44px; }
.radius-label { margin-right: 14px; font-size: 28px; font-weight: 600; color: #555; }
.step {
  display: grid;
  place-items: center;
  width: 35px;
  height: 35px;
  border: 1px solid #ccc;
  border-radius: 50%;
  background: #fff;
}
.radius-input {
  width: 100px;
  height: 26px;
  margin: 0 6px 0 10px;
  border: 1px solid #767676;
  border-radius: 3px;
  font: bold 17px var(--arial);
  text-align: center;
}
.unit { margin-right: 11px; font-size: 28px; color: #8a8a8a; }
.slider {
  appearance: none;
  width: 248px;
  height: 10px;
  margin: 0 0 0 14px;
  border-radius: 5px;
  background: linear-gradient(to right, #4a90e2 24px, #3b3b3b 24px);
}
.slider::-webkit-slider-thumb {
  appearance: none;
  width: 19px;
  height: 19px;
  border-radius: 50%;
  background: #4a90e2;
}

.zone {
  appearance: none;
  height: 48px;
  padding: 0 14px;
  border: 1px solid #c4c4c4;
  border-radius: 8px;
  background: #fff;
  color: #333;
  font: 16px var(--ui);
}

.actions { display: flex; justify-content: space-between; padding-top: 18px; }
.btn {
  display: flex;
  align-items: center;
  gap: 7px;
  height: 56px;
  padding: 0 21px;
  border: 1px solid;
  border-radius: 8px;
  color: #fff;
  fill: #fff;
  font: bold 25px var(--arial);
}
.btn-delete { padding: 0 22px; background: #b10c0c; border-color: #7d0808; }
.btn-save { background: #2b8c2b; border-color: #0c5f1c; }
```
